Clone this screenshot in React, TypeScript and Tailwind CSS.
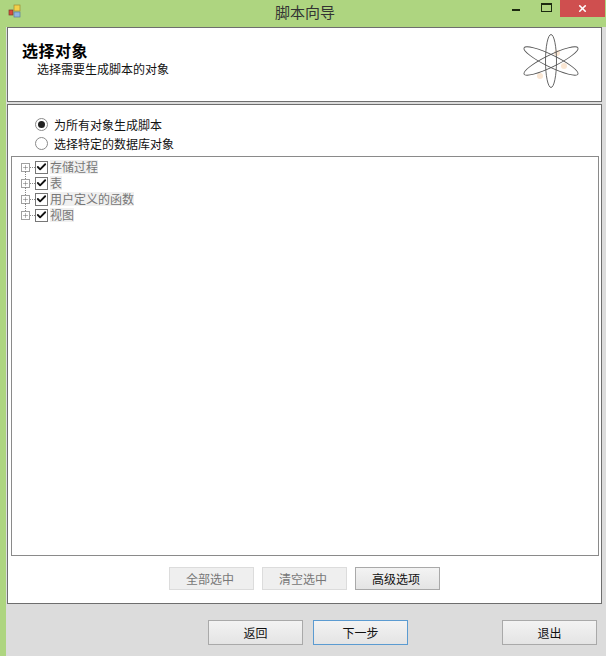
import { Check, Plus, X } from 'lucide-react';

const font = { fontFamily: '"Noto Sans CJK SC", "Liberation Sans", sans-serif' };
const nodes = ['存储过程', '表', '用户定义的函数', '视图'];

function AppIcon() {
  return (
    <svg width="14" height="14" viewBox="0 0 14 14">
      <rect x="1" y="6" width="4" height="5" fill="#d84a3a" stroke="#7a3a30" strokeWidth="0.7" />
      <rect x="6" y="1" width="6" height="6" fill="#f2d04a" stroke="#a08a30" strokeWidth="0.7" />
      <rect x="6" y="8" width="6" height="5" fill="#8fb4e0" stroke="#5a7aa0" strokeWidth="0.7" />
    </svg>
  );
}

function Atom() {
  return (
    <svg width="60" height="56" viewBox="0 0 60 56" fill="none" stroke="#555" strokeWidth="0.9">
      <circle cx="36" cy="20" r="3" fill="#fae6d2" stroke="none" />
      <circle cx="43" cy="33" r="3" fill="#fae6d2" stroke="none" />
      <circle cx="19" cy="43" r="3" fill="#fae6d2" stroke="none" />
      <ellipse cx="30" cy="28" rx="5.5" ry="26.5" />
      <ellipse cx="30" cy="28" rx="6" ry="30" transform="rotate(64 30 28)" />
      <ellipse cx="30" cy="28" rx="6" ry="30" transform="rotate(-64 30 28)" />
    </svg>
  );
}

function Radio({ label, on }: { label: string; on?: boolean }) {
  return (
    <div className="flex h-[19px] items-center">
      <span className="flex h-[13px] w-[13px] items-center justify-center rounded-full border border-[#8a8a8a] bg-white">
        {on && <span className="h-[7px] w-[7px] rounded-full bg-[#222]" />}
      </span>
      <span className="ml-[6px] text-[12px] leading-none text-[#111]">{label}</span>
    </div>
  );
}

function TreeRow({ label, last }: { label: string; last?: boolean }) {
  return (
    <div className="relative flex h-4 items-center">
      {!last && <span className="absolute left-[4px] top-[12px] h-[8px] border-l border-dotted border-[#888]" />}
      <span className="flex h-[9px] w-[9px] items-center justify-center border border-[#a0a0a0] bg-white">
        <Plus size={7} strokeWidth={1.5} color="#555" />
      </span>
      <span className="w-[5px] border-t border-dotted border-[#888]" />
      <span className="flex h-[13px] w-[13px] items-center justify-center border border-[#777] bg-white">
        <Check size={12} strokeWidth={4} color="#111" />
      </span>
      <span className="ml-[2px] bg-[#f0f0f0] text-[12px] leading-[14px] text-[#777]">{label}</span>
    </div>
  );
}

function Btn({ label, w, disabled, active }: { label: string; w: string; disabled?: boolean; active?: boolean }) {
  const tone = disabled
    ? 'border-[#dcdcdc] bg-[#efefef] text-[#777]'
    : active
      ? 'border-[#5b9bd1] bg-gradient-to-b from-[#f3f3f3] to-[#e4e4e4] text-[#111]'
      : 'border-[#a9a9a9] bg-gradient-to-b from-[#f3f3f3] to-[#e4e4e4] text-[#111]';
  return (
    <div className={`flex items-center justify-center border text-[12px] leading-none ${w} ${tone}`}>
      {label}
    </div>
  );
}

export default function App() {
  return (
    <div className="flex h-[656px] w-[606px] flex-col overflow-hidden bg-[#aed580]" style={font}>
      <div className="flex h-[27px] shrink-0 items-start">
        <div className="w-[106px] pl-2 pt-[4px]">
          <AppIcon />
        </div>
        <div className="flex-1 pl-[4px] pt-[3px] text-center text-[15px] leading-[18px] text-[#333]">脚本向导</div>
        <div className="flex w-[32px] justify-center pt-[9px]">
          <span className="h-[2px] w-[8px] bg-[#1c2a10]" />
        </div>
        <div className="flex w-[28px] justify-center pt-[3px]">
          <span className="h-[9px] w-[11px] border border-t-2 border-[#1c2a10]" />
        </div>
        <div className="mr-[1px] flex h-[17px] w-[45px] items-center justify-center bg-[#cf4f4f]">
          <X size={11} strokeWidth={3.5} color="#fff" />
        </div>
      </div>

      <div className="ml-[6px] flex min-h-0 flex-1 flex-col bg-[#dcdcdc]">
        <div className="ml-px mr-[4px] flex h-[75px] shrink-0 justify-between border border-[#6e6e6e] bg-white">
          <div className="pl-[14px] pt-[12px]">
            <div className="text-[16px] font-bold leading-[20px] tracking-[0.5px] text-black">选择对象</div>
            <div className="pl-[15px] text-[12px] leading-[17px] text-[#111]">选择需要生成脚本的对象</div>
          </div>
          <div className="pr-[20px] pt-[5px]">
            <Atom />
          </div>
        </div>

        <div className="ml-px mr-[4px] mt-[2px] flex h-[500px] shrink-0 flex-col border border-[#6e6e6e] bg-white pl-[3px] pr-[2px]">
          <div className="pl-[24px] pt-[10px]">
            <Radio label="为所有对象生成脚本" on />
            <Radio label="选择特定的数据库对象" />
          </div>
          <div className="mt-[3px] h-[400px] border border-[#8a8a8a] pl-[9px] pt-[2px]">
            {nodes.map((n, i) => (
              <TreeRow key={n} label={n} last={i === nodes.length - 1} />
            ))}
          </div>
          <div className="ml-[158px] mt-[11px] flex h-[23px] gap-[8px]">
            <Btn label="全部选中" w="w-[85px] pr-[3px]" disabled />
            <Btn label="清空选中" w="w-[85px] pr-[3px]" disabled />
            <Btn label="高级选项" w="w-[85px] pr-[3px]" />
          </div>
        </div>

        <div className="ml-[202px] mt-[16px] flex h-[25px]">
          <Btn label="返回" w="w-[95px]" />
          <div className="ml-[10px] flex">
            <Btn label="下一步" w="w-[95px]" active />
          </div>
          <div className="ml-[94px] flex">
            <Btn label="退出" w="w-[95px]" />
          </div>
        </div>
      </div>
    </div>
  );
}
